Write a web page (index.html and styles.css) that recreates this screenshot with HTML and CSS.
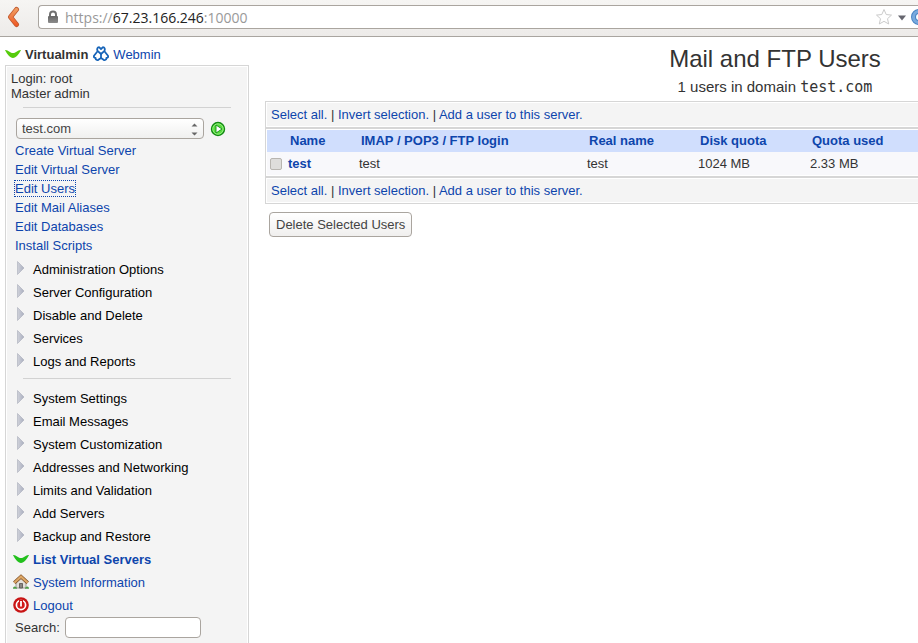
FILE: index.html
```html
<!DOCTYPE html>
<html lang="en">
<head>
    <meta charset="UTF-8">
    <meta name="viewport" content="width=device-width, initial-scale=1.0">
    <title>Mail and FTP Users</title>
    <link rel="stylesheet" href="styles.css">
</head>
<body>
    <!-- Shared icon shapes -->
    <svg class="defs" width="0" height="0">
        <defs>
            <linearGradient id="arrow-fill" x1="0" y1="0" x2="1" y2="0">
                <stop offset="0" stop-color="#d0d2da"/>
                <stop offset="1" stop-color="#a9aebf"/>
            </linearGradient>
            <linearGradient id="back-fill" gradientUnits="userSpaceOnUse" x1="0" y1="1" x2="0" y2="21">
                <stop offset="0" stop-color="#f0a468"/>
                <stop offset="1" stop-color="#f0541f"/>
            </linearGradient>
            <linearGradient id="lock-fill" x1="0" y1="0" x2="0" y2="1">
                <stop offset="0" stop-color="#666"/>
                <stop offset="1" stop-color="#8c8c8c"/>
            </linearGradient>
            <symbol id="closed" viewBox="0 0 8 15">
                <path d="M.5 .5v13l6.500-6.500z" fill="url(#arrow-fill)" stroke="#a9adba" stroke-width=".6"/>
            </symbol>
            <symbol id="vmin" viewBox="0 0 16 10">
                <path d="M0 1c3-.6 4.500 3 8 3s5-3.600 8-3c-2 4-5 8-8 8S2 5 0 1z"/>
            </symbol>
        </defs>
    </svg>

    <header class="toolbar">
        <button class="back" type="button" aria-label="Back">
            <svg width="14" height="22" viewBox="0 0 14 22" fill="none" stroke-linecap="round" stroke-linejoin="round">
                <path d="M10.500 3.500 4.500 11l6 7.500" stroke="#c05a30" stroke-width="5"/>
                <path d="M10.500 3.500 4.500 11l6 7.500" stroke="url(#back-fill)" stroke-width="3.400"/>
            </svg>
        </button>
        <div class="address">
            <svg width="12" height="14" viewBox="0 0 12 14">
                <path d="M3 7V4.500a3 3 0 0 1 6 0V7" fill="none" stroke="#707070" stroke-width="2"/>
                <rect x="1" y="6" width="10" height="7" rx="1" fill="url(#lock-fill)"/>
            </svg>
            <span class="url">https://<span class="host">67.23.166.246</span>:10000</span>
            <svg class="star" width="18" height="18" viewBox="0 0 18 18">
                <path d="M9 1.500l2.200 5 5.300.6-4 3.600 1.200 5.300L9 13.300 4.300 16l1.200-5.300-4-3.600 5.300-.6z" fill="#fff" stroke="#cbcbcb" stroke-linejoin="round"/>
            </svg>
            <svg class="history" width="10" height="6" viewBox="0 0 10 6"><path d="M1 .5h8L5 5.500z" fill="#66666f"/></svg>
            <svg class="reload" width="7" height="16" viewBox="0 0 7 16">
                <circle cx="8" cy="8" r="5.500" fill="none" stroke="#4a84c4" stroke-width="5"/>
                <circle cx="8" cy="8" r="5.500" fill="none" stroke="#79aade" stroke-width="3"/>
            </svg>
        </div>
    </header>

    <div class="page">
        <aside class="sidebar">
            <div class="modes">
                <svg width="16" height="10" fill="#56cc0c"><use href="#vmin"/></svg>
                <b>Virtualmin</b>
                <svg class="webmin" width="16" height="16" viewBox="0 0 16 16" fill="none" stroke="#1764b8" stroke-width="1.800" stroke-linejoin="round" stroke-linecap="round">
                    <path d="M8 3 6 1.200C4.400 1.200 3.700 3 4.500 4.800L8 8l3.500-3.200C12.300 3 11.600 1.200 10 1.200z"/>
                    <path d="M4 6 1.200 9.500c-.8 1.400 0 2.600 1.400 2.500-.1 1.800 1.400 2.400 2.800 1.800L8 12V8.500"/>
                    <path d="M12 6l2.800 3.500c.8 1.400 0 2.600-1.400 2.500.1 1.800-1.400 2.400-2.800 1.800L8 12"/>
                </svg>
                <a href="#">Webmin</a>
            </div>

            <nav class="menu">
                <div class="login">Login: root<br>Master admin</div>
                <hr>
                <form class="domain">
                    <div class="select">
                        <select aria-label="Domain">
                            <option>test.com</option>
                        </select>
                        <svg width="7" height="13" viewBox="0 0 7 13" fill="#666"><path d="M.5 3.500h6L3.500 .5zM.5 9.500h6l-3 3z"/></svg>
                    </div>
                    <button type="submit" aria-label="Go">
                        <svg width="16" height="16" viewBox="0 0 16 16">
                            <circle cx="8" cy="8" r="6.500" fill="#55dd3c" stroke="#138a13" stroke-width="1.400"/>
                            <circle cx="8" cy="8" r="5.200" fill="none" stroke="#a4f090" stroke-width=".8"/>
                            <path d="M6 4v8L12 8z" fill="#fff" stroke="#138a13" stroke-width=".9"/>
                        </svg>
                    </button>
                </form>
                <ul class="links">
                    <li><a href="#">Create Virtual Server</a></li>
                    <li><a href="#">Edit Virtual Server</a></li>
                    <li><a class="current" href="#">Edit Users</a></li>
                    <li><a href="#">Edit Mail Aliases</a></li>
                    <li><a href="#">Edit Databases</a></li>
                    <li><a href="#">Install Scripts</a></li>
                </ul>
                <ul class="groups">
                    <li><svg width="8" height="15"><use href="#closed"/></svg><a href="#">Administration Options</a></li>
                    <li><svg width="8" height="15"><use href="#closed"/></svg><a href="#">Server Configuration</a></li>
                    <li><svg width="8" height="15"><use href="#closed"/></svg><a href="#">Disable and Delete</a></li>
                    <li><svg width="8" height="15"><use href="#closed"/></svg><a href="#">Services</a></li>
                    <li><svg width="8" height="15"><use href="#closed"/></svg><a href="#">Logs and Reports</a></li>
                </ul>
                <hr>
                <ul class="groups">
                    <li><svg width="8" height="15"><use href="#closed"/></svg><a href="#">System Settings</a></li>
                    <li><svg width="8" height="15"><use href="#closed"/></svg><a href="#">Email Messages</a></li>
                    <li><svg width="8" height="15"><use href="#closed"/></svg><a href="#">System Customization</a></li>
                    <li><svg width="8" height="15"><use href="#closed"/></svg><a href="#">Addresses and Networking</a></li>
                    <li><svg width="8" height="15"><use href="#closed"/></svg><a href="#">Limits and Validation</a></li>
                    <li><svg width="8" height="15"><use href="#closed"/></svg><a href="#">Add Servers</a></li>
                    <li><svg width="8" height="15"><use href="#closed"/></svg><a href="#">Backup and Restore</a></li>
                </ul>
                <ul class="actions">
                    <li>
                        <svg width="16" height="10" fill="#22c01c"><use href="#vmin"/></svg>
                        <a href="#"><b>List Virtual Servers</b></a>
                    </li>
                    <li>
                        <svg width="16" height="16" viewBox="0 0 16 16">
                            <path d="M3 8.500 8 4l5 4.500V14H3z" fill="#e3dfda" stroke="#8a8580" stroke-width=".8"/>
                            <path d="M6.500 14V9.500h3V14z" fill="#8b8683" stroke="#55504d" stroke-width=".8"/>
                            <path d="M0 14.800c0-3 3.500-3 4 0zM12 14.800c.5-3 4-3 4 0z" fill="#4c9c45"/>
                            <path d="M1.300 8.800 8 2.600l6.700 6.200" fill="none" stroke="#7a4a20" stroke-width="3.600"/>
                            <path d="M1.300 8.800 8 2.600l6.700 6.200" fill="none" stroke="#dda766" stroke-width="2.200"/>
                        </svg>
                        <a href="#">System Information</a>
                    </li>
                    <li>
                        <svg width="16" height="16" viewBox="0 0 16 16">
                            <circle cx="8" cy="8" r="7.800" fill="#c81414"/>
                            <circle cx="8" cy="8" r="4.600" fill="#d41b1b" stroke="#fff" stroke-width="1.700"/>
                            <path d="M8 2.500v6" stroke="#cc1616" stroke-width="4"/>
                            <path d="M8 4v5.500" stroke="#fff" stroke-width="1.800"/>
                        </svg>
                        <a href="#">Logout</a>
                    </li>
                </ul>
                <form class="search">
                    <label for="search">Search:</label>
                    <input type="text" id="search">
                </form>
            </nav>
        </aside>

        <main>
            <h1>Mail and FTP Users</h1>
            <p class="subtitle">1 users in domain <code>test.com</code></p>

            <div class="box select-links">
                <div><a href="#">Select all.</a> | <a href="#">Invert selection.</a> | <a href="#">Add a user to this server.</a></div>
            </div>
            <div class="box">
                <table>
                    <colgroup>
                        <col class="col-check"><col class="col-name"><col class="col-login"><col class="col-real"><col class="col-quota"><col>
                    </colgroup>
                    <thead>
                        <tr>
                            <th></th>
                            <th><a href="#">Name</a></th>
                            <th><a href="#">IMAP / POP3 / FTP login</a></th>
                            <th><a href="#">Real name</a></th>
                            <th><a href="#">Disk quota</a></th>
                            <th><a href="#">Quota used</a></th>
                        </tr>
                    </thead>
                    <tbody>
                        <tr>
                            <td><input type="checkbox" aria-label="Select test"></td>
                            <td><a href="#"><b>test</b></a></td>
                            <td>test</td>
                            <td>test</td>
                            <td>1024 MB</td>
                            <td>2.33 MB</td>
                        </tr>
                    </tbody>
                </table>
            </div>
            <div class="box select-links">
                <div><a href="#">Select all.</a> | <a href="#">Invert selection.</a> | <a href="#">Add a user to this server.</a></div>
            </div>
            <button class="delete" type="button">Delete Selected Users</button>
        </main>
    </div>
</body>
</html>
```
FILE: styles.css
```css
* {
    box-sizing: border-box;
}

body {
    margin: 0;
    background-color: #fff;
    color: #333;
    font-family: "Liberation Sans", Arial, sans-serif;
    font-size: 13px;
    line-height: 15px;
    overflow: hidden;
}

a {
    color: #0d45ac;
    text-decoration: none;
}

ul {
    list-style: none;
    margin: 0;
    padding: 0;
}

svg {
    display: block;
    flex: none;
}

.defs {
    position: absolute;
}

/* Browser bar */
.toolbar {
    display: flex;
    align-items: center;
    height: 37px;
    padding-bottom: 2px;
    background: linear-gradient(#f6f5f3, #edebe9);
    border-bottom: 1px solid #a9a5a0;
}

.back {
    width: 38px;
    padding: 0 0 0 6px;
    border: none;
    background: none;
}

.address {
    flex: 1;
    display: flex;
    align-items: center;
    height: 24px;
    padding-left: 8px;
    background-color: #fff;
    border: 1px solid #aaa59f;
    border-right: none;
    border-radius: 4px 0 0 4px;
}

.url {
    flex: 1;
    padding: 2px 0 0 6px;
    color: #999;
    font-family: "Open Sans", sans-serif;
    font-size: 14px;
    line-height: 20px;
}

.host {
    color: #222;
}

.star {
    margin-right: 4px;
}

.history {
    margin-top: 2px;
}

.reload {
    margin-left: 4px;
}

.page {
    display: flex;
    gap: 16px;
    padding-left: 5px;
}

/* Left menu */
.sidebar {
    flex: none;
    width: 244px;
}

.modes {
    display: flex;
    align-items: center;
    gap: 4px;
    height: 28px;
    padding-top: 6px;
}

.webmin {
    margin-left: 1px;
}

.menu {
    min-height: 600px;
    padding: 4px 17px 8px 4px;
    background-color: #f4f4f4;
    border: 1px solid #d6d6d6;
    outline: 1px solid #fff;
    outline-offset: -2px;
}

.login {
    padding: 1px;
}

hr {
    height: 1px;
    margin: 5px 0 8px 13px;
    border: none;
    background-color: #d2d2d2;
}

.domain {
    display: flex;
    align-items: center;
    gap: 6px;
    padding: 2px 0 0 6px;
}

.select {
    position: relative;
    width: 188px;
}

.select select {
    display: block;
    width: 100%;
    height: 21px;
    padding: 0 5px;
    appearance: none;
    background: linear-gradient(#fff, #f0f0ef);
    border: 1px solid #aaa59f;
    border-radius: 4px;
    color: #444;
    font: inherit;
}

.select svg {
    position: absolute;
    top: 5px;
    right: 6px;
    pointer-events: none;
}

.domain button {
    padding: 0;
    border: none;
    background: none;
}

.links {
    padding: 2px 5px 3px;
}

.links li {
    line-height: 19px;
}

.links .current {
    outline: 1px dotted #0d45ac;
}

.groups li,
.actions li {
    display: flex;
    align-items: center;
    height: 23px;
}

.groups li {
    gap: 8px;
    padding-left: 7px;
}

.groups svg {
    margin-bottom: 2px;
}

.groups a {
    color: #000;
}

.actions li {
    gap: 4px;
    padding-left: 3px;
}

.actions svg {
    margin-bottom: 2px;
}

.search {
    display: flex;
    align-items: center;
    gap: 5px;
    padding-left: 5px;
}

.search input {
    width: 136px;
    height: 21px;
    border: 1px solid #aaa59f;
    border-radius: 4px;
    background-color: #fff;
}

/* Users list, runs off to the right on narrow windows */
main {
    flex: 1 0 1020px;
    width: 1020px;
    padding-top: 6px;
}

h1 {
    margin: 0;
    font-size: 24px;
    font-weight: normal;
    line-height: 32px;
    text-align: center;
}

.subtitle {
    margin: 0;
    padding: 2px 0 4px;
    font-size: 15px;
    line-height: 20px;
    text-align: center;
}

.subtitle code {
    font-family: "DejaVu Sans Mono", monospace;
    font-size: 15px;
}

.box {
    padding: 1px;
    border: 1px solid #d6d6d6;
}

.select-links div {
    padding: 4px;
    background-color: #f4f4f4;
}

table {
    width: 100%;
    table-layout: fixed;
    border-collapse: collapse;
    background-color: #f8f8fb;
}

.col-check {
    width: 17px;
}

.col-name {
    width: 71px;
}

.col-login {
    width: 228px;
}

.col-real {
    width: 111px;
}

.col-quota {
    width: 112px;
}

th {
    height: 22px;
    padding: 0 6px 1px;
    background-color: #d0defd;
    text-align: left;
    white-space: nowrap;
}

td {
    height: 23px;
    padding: 0 4px;
}

td:first-child {
    padding: 0 3px;
}

td input {
    display: block;
    width: 12px;
    height: 12px;
    margin: 0;
    appearance: none;
    background-color: #dedddb;
    border: 1px solid #b8b5b0;
    border-radius: 2px;
}

.delete {
    height: 25px;
    margin: 8px 4px;
    padding: 0 6px;
    background: linear-gradient(#fff, #f0efee);
    border: 1px solid #aaa59f;
    border-radius: 4px;
    color: #444;
    font: inherit;
}
```
